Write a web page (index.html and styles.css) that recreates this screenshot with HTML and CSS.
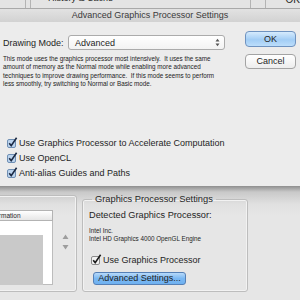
FILE: index.html
```html
<!DOCTYPE html>
<html lang="en">
<head>
<meta charset="UTF-8">
<meta name="viewport" content="width=device-width, initial-scale=1.0">
<title>Advanced Graphics Processor Settings</title>
<link rel="stylesheet" href="styles.css">
</head>
<body>
<div class="behind-top">
  <div class="edge edge-a"></div>
  <div class="edge edge-b"></div>
  <div class="behind-label">History &amp; Cache</div>
  <div class="edge edge-c"></div>
  <div class="behind-ok">OK</div>
</div>

<div class="dialog">
  <div class="titlebar">Advanced Graphics Processor Settings</div>
  <div class="dialog-body">
    <div class="main-col">
      <div class="mode-row">
        <span class="mode-label">Drawing Mode:</span>
        <div class="select">
          <span>Advanced</span>
          <svg class="updown" width="5" height="9" viewBox="0 0 5 9"><path d="M0.5 3.5 L2.5 0.8 L4.5 3.5 Z M0.5 5.5 L2.5 8.2 L4.5 5.5 Z" fill="#555"/></svg>
        </div>
      </div>
      <p class="mode-desc">This mode uses the graphics processor most intensively.&nbsp; It uses the same<br>amount of memory as the Normal mode while enabling more advanced<br>techniques to improve drawing performance.&nbsp; If this mode seems to perform<br>less smoothly, try switching to Normal or Basic mode.</p>
      <div class="checks">
        <div class="check">
          <svg width="11" height="11" viewBox="0 0 11 11"><rect x="0.5" y="2.5" width="8" height="8" rx="1.5" fill="#bcd4ee" stroke="#6f8fb4"/><path d="M2.2 6.2 L4.2 8.6 L9.6 0.8" fill="none" stroke="#1b2a44" stroke-width="1.6"/></svg>
          <span>Use Graphics Processor to Accelerate Computation</span>
        </div>
        <div class="check">
          <svg width="11" height="11" viewBox="0 0 11 11"><rect x="0.5" y="2.5" width="8" height="8" rx="1.5" fill="#bcd4ee" stroke="#6f8fb4"/><path d="M2.2 6.2 L4.2 8.6 L9.6 0.8" fill="none" stroke="#1b2a44" stroke-width="1.6"/></svg>
          <span>Use OpenCL</span>
        </div>
        <div class="check">
          <svg width="11" height="11" viewBox="0 0 11 11"><rect x="0.5" y="2.5" width="8" height="8" rx="1.5" fill="#bcd4ee" stroke="#6f8fb4"/><path d="M2.2 6.2 L4.2 8.6 L9.6 0.8" fill="none" stroke="#1b2a44" stroke-width="1.6"/></svg>
          <span>Anti-alias Guides and Paths</span>
        </div>
      </div>
    </div>
    <div class="button-col">
      <div class="btn btn-default">OK</div>
      <div class="btn">Cancel</div>
    </div>
  </div>
</div>

<div class="behind-bottom">
  <div class="info-group">
    <div class="info-table">
      <div class="info-head"><span>Information</span></div>
      <div class="info-list"><div class="info-fill"></div></div>
    </div>
    <svg class="stepper" width="7" height="17" viewBox="0 0 7 17"><path d="M0.5 5 L3.5 0.5 L6.5 5 Z M0.5 11 L3.5 15.5 L6.5 11 Z" fill="#9d9d9d"/></svg>
  </div>
  <fieldset class="gpu-group">
    <legend>Graphics Processor Settings</legend>
    <div class="gpu-detected">Detected Graphics Processor:</div>
    <div class="gpu-name">Intel Inc.<br>Intel HD Graphics 4000 OpenGL Engine</div>
    <div class="check gpu-check">
      <svg width="11" height="11" viewBox="0 0 11 11"><rect x="0.5" y="2.5" width="8" height="8" rx="1.5" fill="#f2f2f2" stroke="#8a8a8a"/><path d="M2.2 6.2 L4.2 8.6 L9.6 0.8" fill="none" stroke="#1a1a1a" stroke-width="1.6"/></svg>
      <span>Use Graphics Processor</span>
    </div>
    <div class="btn btn-blue">Advanced Settings...</div>
  </fieldset>
</div>
</body>
</html>
```

FILE: styles.css
```css
body {
  margin: 0;
  width: 300px;
  height: 300px;
  overflow: hidden;
  font-family: "Lucida Grande", "Liberation Sans", Arial, sans-serif;
  font-size: 9px;
  color: #1e1e1e;
  background-color: #e6e6e6;
}

/* window behind the sheet, top strip */
.behind-top {
  display: flex;
  height: 8px;
  overflow: hidden;
  background-color: #e4e4e4;
}
.edge {
  height: 8px;
  border-right: 1px solid #b4b4b4;
}
.edge-a {
  width: 25px;
}
.edge-b {
  width: 4px;
}
.edge-c {
  width: 14px;
  border-left: 1px solid #b4b4b4;
}
.behind-label {
  flex: 1;
  padding-left: 17px;
  margin-top: -6px;
  line-height: 9px;
}
.behind-ok {
  padding-left: 20px;
  margin-top: -5px;
  line-height: 9px;
  font-size: 10px;
}

/* the sheet */
.dialog {
  height: 178px;
  display: flex;
  flex-direction: column;
  background-color: #ececec;
}
.titlebar {
  height: 13px;
  line-height: 13px;
  text-align: center;
  color: #3a3a3a;
  border-top: 1px solid #a9a9a9;
  background: linear-gradient(#e2e2e2, #d2d2d2);
}
.dialog-body {
  flex: 1;
  display: flex;
  padding: 9px 4px 0 3px;
}
.main-col {
  width: 222px;
}
.mode-row {
  display: flex;
  align-items: center;
  margin-top: 4px;
  height: 15px;
}
.mode-label {
  width: 65px;
}
.select {
  flex: 1;
  height: 13px;
  display: flex;
  align-items: center;
  justify-content: space-between;
  padding: 0 4px 0 6px;
  border: 1px solid #ababab;
  border-radius: 3px;
  background: linear-gradient(#ffffff, #f3f3f3);
}
.mode-desc {
  margin: 5px 0 0;
  font-size: 6.3px;
  line-height: 8.3px;
  color: #222;
  white-space: nowrap;
}
.checks {
  margin-top: 47px;
}
.check {
  display: flex;
  align-items: center;
  height: 15px;
  padding-left: 4px;
}
.check svg {
  margin-right: 1px;
}

.button-col {
  margin-left: auto;
  width: 51px;
  display: flex;
  flex-direction: column;
  gap: 7px;
}
.btn {
  height: 13px;
  line-height: 13px;
  text-align: center;
  border: 1px solid #a3a3a3;
  border-radius: 4px;
  background: linear-gradient(#ffffff, #ededed);
}
.btn-default {
  height: 14px;
  line-height: 14px;
  border-color: #6f93c0;
  background: linear-gradient(#d6ebfd, #a2cdf5 55%, #bcdefb);
}

/* window behind the sheet, lower part */
.behind-bottom {
  height: 114px;
  display: flex;
  align-items: flex-start;
  gap: 5px;
  padding-top: 9px;
  box-sizing: border-box;
  background: linear-gradient(#8e8e8e, #c9c9c9 6px, #e0e0e0 18px, #e6e6e6 30px);
}
.info-group {
  width: 83px;
  height: 97px;
  margin-left: -6px;
  box-sizing: border-box;
  display: flex;
  align-items: flex-start;
  padding: 14px 0 0 5px;
  border: 1px solid #bdbdbd;
  border-radius: 3px;
  box-shadow: inset 0 0 0 1px #f2f2f2;
}
.info-table {
  width: 53px;
}
.info-head {
  height: 9px;
  line-height: 9px;
  font-size: 6.5px;
  overflow: hidden;
  border: 1px solid #b3b3b3;
  border-left: none;
  background: linear-gradient(#ffffff, #e6e6e6);
}
.info-head span {
  margin-left: -12px;
}
.info-list {
  height: 64px;
  padding-top: 14px;
  box-sizing: border-box;
  background-color: #fff;
  border: 1px solid #bcbcbc;
  border-top: none;
  border-left: none;
}
.info-fill {
  width: 43px;
  height: 50px;
  background-color: #c9c9c9;
}
.stepper {
  margin: 24px 0 0 9px;
}

.gpu-group {
  width: 166px;
  height: 98px;
  margin: -1px 0 0;
  padding: 4px 6px 0;
  box-sizing: border-box;
  border: 1px solid #bdbdbd;
  border-radius: 3px;
  box-shadow: inset 0 0 0 1px #f2f2f2;
}
.gpu-group legend {
  margin-left: 3px;
  padding: 0 3px;
  font-size: 9.3px;
  line-height: 11px;
  color: #262626;
}
.gpu-detected {
  line-height: 12px;
  font-size: 9.2px;
}
.gpu-name {
  margin-top: 6px;
  font-size: 6.3px;
  line-height: 7.5px;
}
.gpu-check {
  margin-top: 11px;
  height: 13px;
  padding-left: 2px;
}
.btn-blue {
  width: 91px;
  height: 11px;
  line-height: 11px;
  margin: 6px 0 0 4px;
  border-radius: 3px;
  border-color: #5580b6;
  background: linear-gradient(#b8dafa, #7bb8f2 50%, #6eb0f0);
}
```
